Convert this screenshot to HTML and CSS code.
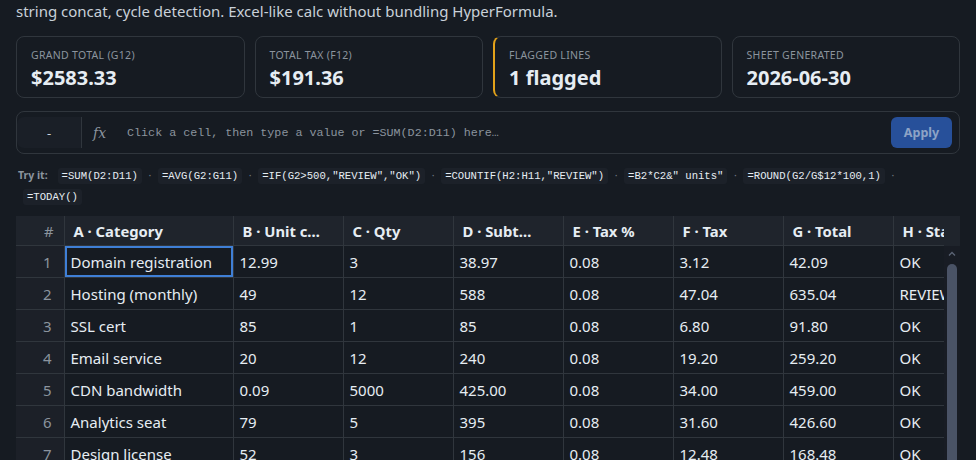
FILE: index.html
```html
<!DOCTYPE html>
<html lang="en">
<head>
    <meta charset="UTF-8">
    <meta name="viewport" content="width=device-width, initial-scale=1.0">
    <title>Budget Sheet</title>
    <link rel="stylesheet" href="styles.css">
</head>
<body>
    <div class="intro">
        <h1>Budget Sheet</h1>
        <p>Tiny formula engine: SUM, AVG, IF, COUNTIF, ROUND, TODAY, absolute refs ($), cross-cell deps,<br>
        string concat, cycle detection. Excel-like calc without bundling HyperFormula.</p>
    </div>

    <div class="cards" id="cards">
        <div class="card">
            <div class="card-label">Grand total (G12)</div>
            <div class="card-value">$2583.33</div>
        </div>
        <div class="card">
            <div class="card-label">Total tax (F12)</div>
            <div class="card-value">$191.36</div>
        </div>
        <div class="card flagged">
            <div class="card-label">Flagged lines</div>
            <div class="card-value">1 flagged</div>
        </div>
        <div class="card">
            <div class="card-label">Sheet generated</div>
            <div class="card-value">2026-06-30</div>
        </div>
    </div>

    <div class="formula-bar">
        <div class="cell-ref">-</div>
        <div class="fx">fx</div>
        <input class="formula-input" type="text" placeholder="Click a cell, then type a value or =SUM(D2:D11) here…" disabled>
        <button class="apply" disabled>Apply</button>
    </div>

    <div class="tryit"><span class="tryit-label">Try it:</span><code>=SUM(D2:D11)</code><span class="dot">·</span><code>=AVG(G2:G11)</code><span class="dot">·</span><code>=IF(G2&gt;500,"REVIEW","OK")</code><span class="dot">·</span><code>=COUNTIF(H2:H11,"REVIEW")</code><span class="dot">·</span><code>=B2*C2&amp;" units"</code><span class="dot">·</span><code>=ROUND(G2/G$12*100,1)</code><span class="dot">·</span> <code class="wrap">=TODAY()</code></div>

    <div class="sheet">
        <div class="sheet-head">
            <div class="head-clip">
                <table>
                    <colgroup><col class="c-num"><col class="c-a"><col><col><col><col><col><col><col></colgroup>
                    <tr>
                        <th class="rownum">#</th>
                        <th>A · Category</th>
                        <th>B · Unit cost</th>
                        <th>C · Qty</th>
                        <th>D · Subtotal</th>
                        <th>E · Tax %</th>
                        <th>F · Tax</th>
                        <th>G · Total</th>
                        <th>H · Status</th>
                    </tr>
                </table>
            </div>
        </div>
        <div class="sheet-body">
            <div class="rows-clip">
                <table id="rows">
                    <colgroup><col class="c-num"><col class="c-a"><col><col><col><col><col><col><col></colgroup>
                </table>
            </div>
            <div class="rail">
                <svg class="rail-up" width="8" height="5" viewBox="0 0 8 5"><path d="M1 4.5 L4 1.5 L7 4.5" fill="none" stroke="#5b6475" stroke-width="1.3"/></svg>
                <div class="rail-thumb"></div>
            </div>
        </div>
    </div>

    <script>
        let rows = [
            ['Domain registration', '12.99', '3', '38.97', '0.08', '3.12', '42.09', 'OK'],
            ['Hosting (monthly)', '49', '12', '588', '0.08', '47.04', '635.04', 'REVIEW'],
            ['SSL cert', '85', '1', '85', '0.08', '6.80', '91.80', 'OK'],
            ['Email service', '20', '12', '240', '0.08', '19.20', '259.20', 'OK'],
            ['CDN bandwidth', '0.09', '5000', '425.00', '0.08', '34.00', '459.00', 'OK'],
            ['Analytics seat', '79', '5', '395', '0.08', '31.60', '426.60', 'OK'],
            ['Design license', '52', '3', '156', '0.08', '12.48', '168.48', 'OK'],
            ['Backup storage', '8', '12', '96', '0.08', '7.68', '103.68', 'OK'],
            ['Monitoring', '29', '8', '232', '0.08', '18.56', '250.56', 'OK'],
            ['Support plan', '136', '1', '136', '0.08', '10.88', '146.88', 'OK']
        ];

        let table = document.getElementById('rows');
        rows.forEach(function (r, i) {
            let tr = document.createElement('tr');
            let html = '<td class="rownum">' + (i + 1) + '</td>';
            r.forEach(function (v, j) {
                let cls = (i === 0 && j === 0) ? ' class="selected"' : '';
                html += '<td' + cls + '>' + v + '</td>';
            });
            tr.innerHTML = html;
            table.appendChild(tr);
        });

        let cards = document.getElementById('cards');
        window.scrollTo(0, cards.getBoundingClientRect().top + window.scrollY - 36);
    </script>
</body>
</html>
```

FILE: styles.css
```css
body { margin: 0; padding: 0 16px 40px; background: #161b22; color: #e6edf3; font-family: "Noto Sans", "Open Sans", sans-serif; }
.intro { padding-top: 20px; }
.intro h1 { margin: 0 0 8px; font-size: 24px; }
.intro p { margin: 0; font-size: 15px; line-height: 22px; color: #c9d1d9; }

.cards { display: grid; grid-template-columns: repeat(4, 1fr); gap: 10px; margin-top: 14px; }
.card { height: 62px; box-sizing: border-box; border: 1px solid #30363d; border-radius: 8px; padding: 10px 14px 0; }
.card.flagged { border-left: 2px solid #e3a21a; }
.card-label { font-size: 10.5px; text-transform: uppercase; letter-spacing: .3px; color: #8b949e; line-height: 16px; }
.card-value { font-size: 20px; font-weight: 700; line-height: 26px; margin-top: 2px; }

.formula-bar { display: flex; align-items: center; height: 43px; box-sizing: border-box; margin-top: 13px; border: 1px solid #30363d; border-radius: 8px; padding: 0 7px 0 0; }
.cell-ref { width: 64px; align-self: stretch; margin: 5px 0; border-right: 1px solid #30363d; background: #1a1f27; display: flex; align-items: center; justify-content: center; color: #c9d1d9; font-size: 13px; border-radius: 7px 0 0 7px; }
.fx { font-family: "DejaVu Serif", serif; font-style: italic; font-size: 14px; color: #8b949e; margin: 0 21px 0 11px; }
.formula-input { flex: 1; background: transparent; border: none; outline: none; font-family: "Liberation Mono", monospace; font-size: 11.7px; color: #8b949e; padding: 0; }
.formula-input::placeholder { color: #8b949e; }
.apply { width: 61px; height: 31px; border: none; border-radius: 6px; background: #27509a; color: #8da3c6; font-family: "Noto Sans", sans-serif; font-weight: 700; font-size: 12.5px; }

.tryit { margin-top: 11px; font-size: 10.5px; line-height: 20px; color: #8b949e; padding: 0 40px 0 2px; }
.tryit-label { font-weight: 700; margin-right: 10px; }
.tryit code { font-family: "Liberation Mono", monospace; font-size: 10.6px; color: #e6edf3; background: #1c2129; padding: 2px 4px; border-radius: 3px; }
.tryit code.wrap { margin-left: 5px; }
.dot { display: inline-block; width: 16px; text-align: center; color: #6e7681; }

.sheet { margin-top: 9px; }
.sheet table { width: 987px; table-layout: fixed; border-collapse: collapse; }
.sheet col { width: 110px; }
.sheet col.c-num { width: 48px; }
.sheet col.c-a { width: 169px; }
.sheet-head { padding-right: 16px; background: #1f242c; }
.head-clip { overflow: hidden; }
.sheet-head th { height: 29px; padding: 0 22px 0 9px; text-align: left; font-size: 14.8px; font-weight: 700; color: #e6edf3; border-left: 1px solid #30363d; border-bottom: 1px solid #30363d; white-space: nowrap; overflow: hidden; text-overflow: ellipsis; }
.sheet-head th.rownum { border-left: none; color: #8b949e; font-weight: 400; text-align: right; padding: 0 10px 0 0; }
.sheet-body { display: flex; height: 340px; background: #161b22; }
.rows-clip { flex: 1; overflow: hidden; }
.sheet-body td { height: 31px; padding: 0 0 0 6px; font-size: 15px; border-left: 1px solid #30363d; border-bottom: 1px solid #30363d; white-space: nowrap; overflow: hidden; }
.sheet-body td.rownum { border-left: none; background: #1c2028; color: #8b949e; text-align: right; padding: 0 12px 0 0; }
.sheet-body td.selected { box-shadow: inset 0 0 0 2px #3f7fd6; }
.rail { width: 16px; display: flex; flex-direction: column; align-items: center; padding-top: 5px; background: #181c24; }
.rail-up { display: block; }
.rail-thumb { width: 10px; height: 230px; margin-top: 8px; border-radius: 5px; background: #4a5366; }
```
